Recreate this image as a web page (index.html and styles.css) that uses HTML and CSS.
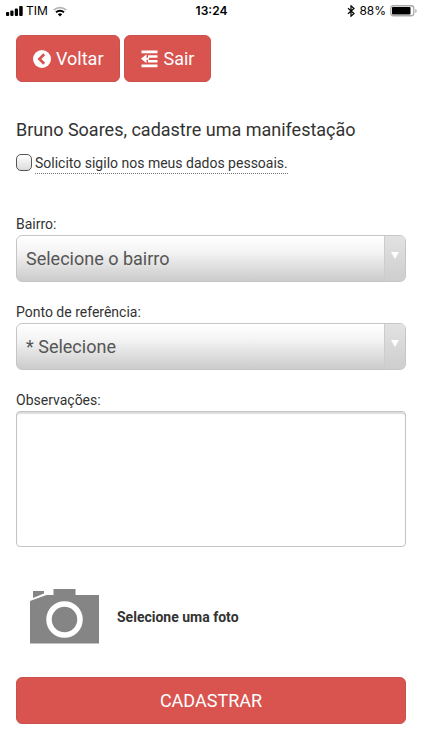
FILE: index.html
```html
<!DOCTYPE html>
<html lang="pt-BR">
<head>
<meta charset="utf-8">
<meta name="viewport" content="width=device-width, initial-scale=1">
<title>Cadastrar manifestação</title>
<link rel="stylesheet" href="styles.css">
</head>
<body>
<header class="status">
  <div class="status-side">
    <svg width="17" height="10" viewBox="0 0 17 10" aria-hidden="true"><rect y="6" width="3.200" height="4" rx="1"/><rect x="4.300" y="4.500" width="3.200" height="5.500" rx="1"/><rect x="8.800" y="2.500" width="3.200" height="7.500" rx="1"/><rect x="13.200" width="3.500" height="10" rx="1"/></svg>
    <span class="carrier">TIM</span>
    <svg width="14" height="11" viewBox="0 0 14 11" fill="none" aria-hidden="true"><path d="M.8 4.1a9 9 0 0 1 12.4 0" stroke="#b5b5b5" stroke-width="1.8"/><path d="M3 6.4a5.8 5.8 0 0 1 8 0" stroke="#000" stroke-width="2"/><path d="M7 10.5 4.8 8.3a3.2 3.2 0 0 1 4.4 0z" fill="#000"/></svg>
  </div>
  <time class="clock">13:24</time>
  <div class="status-side status-right">
    <svg width="8" height="12" viewBox="0 0 8 12" fill="none" stroke="#000" stroke-width="1.2" aria-hidden="true"><path d="m1 3.3 6 5.2-3 2.7V.8l3 2.7-6 5.2"/></svg>
    <span>88%</span>
    <svg width="27" height="12" viewBox="0 0 27 12" aria-hidden="true"><rect x=".75" y=".75" width="23" height="10" rx="2.5" fill="#fff" stroke="#aaa" stroke-width="1.3"/><rect x="2" y="2" width="18.5" height="7.5" rx=".8"/><path d="M25.3 4v4q1.4-.7 1.4-2t-1.4-2" fill="#aaa"/></svg>
  </div>
</header>
<main class="page">
  <nav class="actions">
    <button type="button" class="btn">
      <svg width="18" height="18" viewBox="0 0 18 18" aria-hidden="true"><circle cx="9" cy="9" r="9" fill="#fff"/><path d="M11.2 4.2 6.4 9l4.8 4.8" fill="none" stroke="#d9534f" stroke-width="2.7"/></svg>
      Voltar
    </button>
    <button type="button" class="btn">
      <svg width="17" height="18" viewBox="0 0 17 18" fill="#fff" aria-hidden="true"><path d="M.5.5h16v2.700H.5zM7 5.300h9.500v2.500H7zM7 9.900h9.500v2.500H7zM.5 14.500h16v2.700H.5zM5.500 4.300v9L0 8.800zM5 7.800h3v2H5z"/></svg>
      Sair
    </button>
  </nav>
  <h1 class="title">Bruno Soares, cadastre uma manifestação</h1>
  <form class="form">
    <div class="check">
      <input type="checkbox" id="sigilo" class="check-box">
      <label for="sigilo" class="check-label">Solicito sigilo nos meus dados pessoais.</label>
    </div>
    <div class="field">
      <label for="bairro">Bairro:</label>
      <div class="select-wrap">
        <select id="bairro" class="select"><option>Selecione o bairro</option></select>
      </div>
    </div>
    <div class="field">
      <label for="ponto">Ponto de referência:</label>
      <div class="select-wrap">
        <select id="ponto" class="select"><option>* Selecione</option></select>
      </div>
    </div>
    <div class="field">
      <label for="obs">Observações:</label>
      <textarea id="obs" class="textarea"></textarea>
    </div>
    <button type="button" class="photo">
      <svg width="70" height="55" viewBox="0 0 70 55" aria-hidden="true"><path d="M0 12 16.500 6H23.500V0h22v6h23.500v48.500H0zM3 2h11v2.500L3 9z" fill="#858585"/><circle cx="34.500" cy="30.500" r="15.500" fill="none" stroke="#fff" stroke-width="5.500"/></svg>
      Selecione uma foto
    </button>
    <button type="button" class="btn btn-wide">CADASTRAR</button>
  </form>
</main>
</body>
</html>
```
FILE: styles.css
```css
* {
  box-sizing: border-box;
}

body {
  margin: 0;
  background: #fff;
  color: #333;
  font: 14px/21px Roboto, sans-serif;
}

button,
select,
textarea {
  font-family: inherit;
}

.status {
  display: flex;
  align-items: center;
  height: 22px;
  padding: 0 5px 0 6px;
  color: #000;
  font: 12px/22px Inter, sans-serif;
}

.status-side {
  display: flex;
  flex: 1;
  align-items: center;
  gap: 5px;
}

.status-right {
  gap: 4px;
  justify-content: flex-end;
}

.carrier {
  margin-left: -2px;
}

.clock {
  font-weight: 600;
}

.page {
  padding: 13px 16px 24px;
}

.actions {
  display: flex;
  gap: 4px;
}

.btn {
  display: flex;
  align-items: center;
  justify-content: center;
  gap: 5px;
  height: 47px;
  padding: 0 16px;
  border: 1px solid #c9514e;
  border-radius: 6px;
  background: #d9534f;
  color: #fff;
  font-size: 18px;
}

.btn-wide {
  width: 100%;
}

.title {
  margin: 36px 0 12px;
  font-size: 18px;
  font-weight: 400;
  line-height: 24px;
}

.check {
  display: flex;
  align-items: flex-start;
  gap: 3px;
  margin-bottom: 40px;
}

.check-box {
  appearance: none;
  width: 16px;
  height: 17px;
  margin: 0;
  border: 1px solid #555;
  border-radius: 5px;
  background: linear-gradient(#fff, #dcdcdc);
}

.check-box:checked {
  background: #555;
}

.check-label {
  border-bottom: 1px dotted #777;
  line-height: 19px;
}

.field {
  display: flex;
  flex-direction: column;
  margin-bottom: 20px;
}

.select-wrap {
  position: relative;
}

.select-wrap::before {
  position: absolute;
  top: 1px;
  right: 1px;
  bottom: 1px;
  width: 20px;
  border-left: 1px solid #ccc;
  border-radius: 0 5px 5px 0;
  background: linear-gradient(#e2e2e2, #cecece);
  content: "";
  pointer-events: none;
}

.select-wrap::after {
  position: absolute;
  top: 17px;
  right: 7px;
  border: 4px solid transparent;
  border-top: 7px solid #fff;
  border-bottom: 0;
  content: "";
  pointer-events: none;
}

.select {
  display: block;
  appearance: none;
  width: 100%;
  height: 47px;
  padding: 0 30px 0 9px;
  border: 1px solid #c6c6c6;
  border-radius: 6px;
  background: linear-gradient(#fff, #f4f4f4 35%, #cbcbcb);
  color: #555;
  font-size: 18px;
}

.textarea {
  height: 136px;
  padding: 8px;
  border: 1px solid #c4c4c4;
  border-radius: 4px;
  box-shadow: inset 0 2px 1px #ddd;
  font-size: 18px;
  resize: none;
}

.photo {
  display: flex;
  align-items: center;
  gap: 17px;
  margin: 42px 0 33px;
  padding: 0 0 0 14px;
  border: 0;
  background: none;
  color: #333;
  font-size: 14px;
  font-weight: 700;
}
```
